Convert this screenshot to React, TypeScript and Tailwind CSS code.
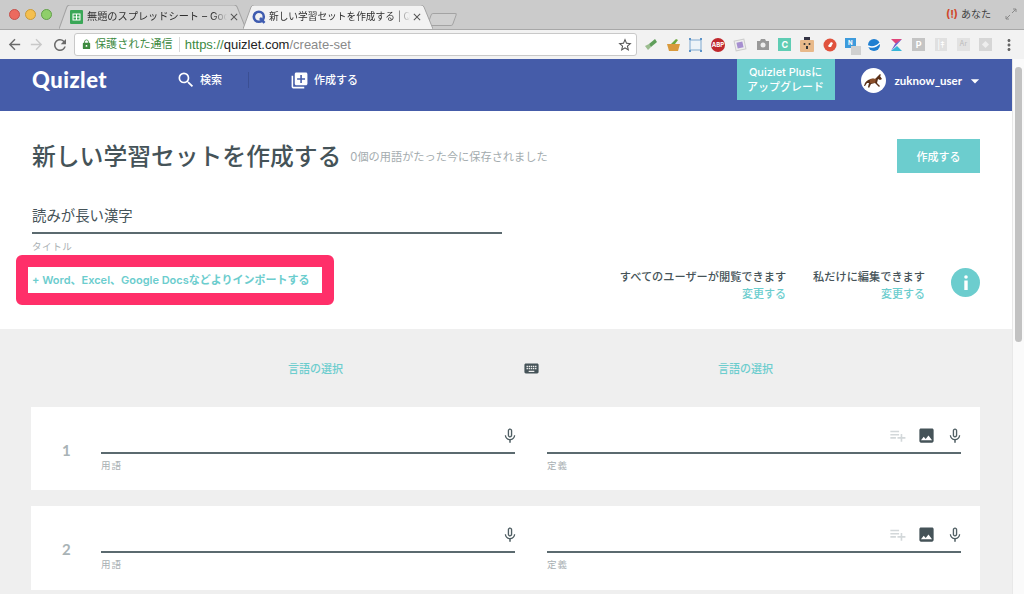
import React from "react";
import {
  MdArrowBack, MdArrowForward, MdRefresh, MdLock, MdStarBorder, MdSearch, MdLibraryAdd,
  MdMicNone, MdPlaylistAdd, MdPhoto, MdKeyboard, MdClose, MdArrowDropDown, MdMoreVert,
} from "react-icons/md";

const jp = "font-['Inter','Noto_Sans_CJK_JP',sans-serif]";

function Tab({ active, width, icon, title, pad, size }: { active?: boolean; width: string; icon: React.ReactNode; title: string; pad: string; size: string }) {
  return (
    <div className={`relative flex h-[24px] items-center ${width} ${active ? "z-10" : ""}`}>
      <svg className="absolute inset-0 h-full w-full" viewBox="0 0 190 24" preserveAspectRatio="none">
        <path
          d="M0 24 L8 2 Q9 0 11 0 L178 0 Q180 0 181 2 L190 24"
          fill={active ? "#f2f2f2" : "#d5d5d5"}
          stroke="#a3a3a3"
          strokeWidth="1"
          vectorEffect="non-scaling-stroke"
        />
      </svg>
      <div className={`relative flex w-full items-center ${pad}`}>
        <div className="flex w-[17px] shrink-0 items-center">{icon}</div>
        <span className={`min-w-0 flex-1 whitespace-nowrap text-[#303030] ${size} [mask-image:linear-gradient(to_right,black_90%,transparent)]`}>
          {title}
        </span>
        <MdClose className="ml-[1px] shrink-0 text-[#555]" size={12} />
      </div>
    </div>
  );
}

function SheetIcon() {
  return (
    <svg width="13" height="14" viewBox="0 0 13 14">
      <rect width="13" height="14" rx="1" fill="#3aa757" />
      <rect x="3" y="4" width="7" height="6" fill="none" stroke="#fff" strokeWidth="1" />
      <path d="M3 7h7M6.5 4v6" stroke="#fff" strokeWidth="1" />
    </svg>
  );
}

function QIcon() {
  return (
    <svg width="14" height="14" viewBox="0 0 14 14">
      <circle cx="6.8" cy="6.8" r="5" fill="none" stroke="#3f5cb0" strokeWidth="2.6" />
      <path d="M8 8l4.5 4.8" stroke="#3f5cb0" strokeWidth="2.6" />
    </svg>
  );
}

const extensions: React.ReactNode[] = [
  <svg key="a" width="14" height="14" viewBox="0 0 14 14"><path d="M1 8l4-2 2 3-3 3z" fill="#9bbd8f" /><path d="M5 6l6-5 2 3-6 5z" fill="#5f9e5a" /></svg>,
  <svg key="b" width="15" height="14" viewBox="0 0 15 14"><path d="M1 6h13l-2 7H3z" fill="#d99a3d" /><path d="M5 6l5-5 2 1-3 4z" fill="#6ea83f" /></svg>,
  <svg key="c" width="15" height="14" viewBox="0 0 15 14"><rect x="2" y="2" width="11" height="10" fill="#eef3f8" stroke="#7fa8cf" /><path d="M1 1h2M12 1h2M1 13h2M12 13h2" stroke="#5d93c7" strokeWidth="2" /></svg>,
  <div key="d" className="flex h-[14px] w-[14px] items-center justify-center rounded-full bg-[#c0282d] text-[6px] font-bold text-white">ABP</div>,
  <svg key="e" width="14" height="14" viewBox="0 0 14 14"><rect x="2" y="2" width="10" height="10" fill="#eee" stroke="#ccc" transform="rotate(-12 7 7)" /><rect x="4" y="4" width="6" height="6" fill="#a68fd0" transform="rotate(-12 7 7)" /></svg>,
  <svg key="f" width="14" height="13" viewBox="0 0 14 13"><path d="M1 3h3l1-2h4l1 2h3v9H1z" fill="#999" /><circle cx="7" cy="7" r="2.5" fill="#eee" /></svg>,
  <div key="g" className="flex h-[13px] w-[13px] items-center justify-center bg-[#5fcdb4] text-[9px] font-bold text-white">C</div>,
  <svg key="h" width="14" height="15" viewBox="0 0 14 15"><rect y="3" width="14" height="12" rx="1" fill="#e8b98a" /><rect x="4" y="0" width="6" height="3" fill="#334" /><circle cx="4.5" cy="7" r="1" fill="#333" /><circle cx="9.5" cy="7" r="1" fill="#333" /><rect x="6" y="9" width="2" height="3" fill="#333" /></svg>,
  <svg key="i" width="14" height="14" viewBox="0 0 14 14"><circle cx="7" cy="7" r="6.5" fill="#e0523d" /><path d="M5 8l3-4 2 1-2 4H6z" fill="#fff" /></svg>,
  <div key="j" className="relative h-[14px] w-[14px]">
    <div className="flex h-[10px] w-[11px] items-center justify-center bg-[#3d9bdc] text-[6px] font-bold text-white">N</div>
    <div className="absolute left-[6px] top-[8px] h-[9px] w-[10px] bg-[#d0d0d0]" />
  </div>,
  <svg key="k" width="14" height="14" viewBox="0 0 14 14"><circle cx="7" cy="7" r="6" fill="#1f7fd1" /><path d="M1 8q6 3 12-3" stroke="#fff" strokeWidth="1.4" fill="none" /></svg>,
  <svg key="l" width="13" height="14" viewBox="0 0 13 14"><path d="M1 1h11L6 6z" fill="#e0457a" /><path d="M12 1L1 13l4-7z" fill="#6a5fd0" /><path d="M1 13h11L7 8z" fill="#37b6d8" /></svg>,
  <div key="m" className="flex h-[13px] w-[13px] items-center justify-center bg-[#c4c4c4] text-[9px] font-bold text-white">P</div>,
  <div key="n" className="flex h-[13px] w-[12px] items-center justify-center bg-[#e0e0e0] text-[9px] text-white">|‡</div>,
  <div key="o" className="flex h-[13px] w-[13px] items-center justify-center bg-[#e2e2e2] text-[7px] text-[#bbb]">Ar</div>,
  <div key="p" className="flex h-[13px] w-[13px] items-center justify-center bg-[#d6d6d6]"><div className="h-[5px] w-[5px] rotate-45 bg-[#eee]" /></div>,
];

function Chrome() {
  return (
    <div className="shrink-0">
      <div className="flex h-[29px] items-end bg-[#cbcbcb]">
        <div className="flex h-full w-[59px] shrink-0 items-center gap-[5px] pl-[9px] pb-[1px]">
          <div className="h-[11px] w-[11px] rounded-full border border-[#c4524d] bg-[#ec6a5e]" />
          <div className="h-[11px] w-[11px] rounded-full border border-[#c99a3a] bg-[#f4bf4f]" />
          <div className="h-[11px] w-[11px] rounded-full border border-[#62a04a] bg-[#8fcf6a]" />
        </div>
        <Tab width="w-[187px]" pad="pl-[11px] pr-[6px]" size="text-[10.2px]" icon={<SheetIcon />} title="無題のスプレッドシート – Goog" />
        <div className="-ml-[3px] z-10">
          <Tab active width="w-[190px]" pad="pl-[9px] pr-[10px]" size="text-[9.7px]" icon={<QIcon />} title="新しい学習セットを作成する | Q" />
        </div>
        <div className="-ml-[4px] mb-[3px] h-[13px] w-[26px] -skew-x-[20deg] rounded-[2px] border border-[#a3a3a3] bg-[#d0d0d0]" />
        <div className="ml-auto flex h-full items-center pb-[1px] pr-[7px]">
          <span className="text-[11px] font-bold text-[#d0492b]">(!)</span>
          <span className="ml-[3px] text-[10px] text-[#404040]">あなた</span>
          <svg className="ml-[14px]" width="12" height="12" viewBox="0 0 12 12">
            <path d="M7 5l4-4M8 1h3v3M5 7l-4 4M1 8v3h3" stroke="#8a8a8a" fill="none" />
          </svg>
        </div>
      </div>
      <div className="flex h-[30px] items-center border-t border-[#a8a8a8] border-b-0 bg-[#f2f2f2]">
        <div className="flex w-[74px] shrink-0 items-center pl-[6px]">
          <MdArrowBack className="text-[#6a6a6a]" size={17} />
          <MdArrowForward className="ml-[5px] text-[#c8c8c8]" size={17} />
          <MdRefresh className="ml-[6px] text-[#6a6a6a]" size={18} />
        </div>
        <div className="flex h-[23px] w-[563px] shrink-0 items-center rounded-[3px] border border-[#c9c9c9] bg-white pl-[6px] pr-[3px]">
          <MdLock className="text-[#3c8a3f]" size={11} />
          <span className="ml-[3px] whitespace-nowrap text-[11.1px] text-[#3c8a3f]">保護された通信</span>
          <div className="ml-[6px] mr-[5px] h-[15px] w-px bg-[#d8d8d8]" />
          <span className="whitespace-nowrap font-['Liberation_Sans',sans-serif] text-[13px]">
            <span className="text-[#3c8a3f]">https://</span>
            <span className="text-[#222]">quizlet.com</span>
            <span className="text-[#8a8a8a]">/create-set</span>
          </span>
          <MdStarBorder className="ml-auto text-[#555]" size={16} />
        </div>
        <div className="flex flex-1 items-center pl-[3px]">
          {extensions.map((e, i) => (
            <div key={i} className="flex w-[22.3px] justify-center">{e}</div>
          ))}
          <MdMoreVert className="ml-[3px] text-[#666]" size={18} />
        </div>
      </div>
    </div>
  );
}

function Horse() {
  return (
    <svg className="h-[25px] w-[25px] rounded-full bg-white" viewBox="0 0 25 25">
      <path d="M4 15q4-5 10-4l3-3 2-2 1 1-1 1 2 3-2 1-2-1-1 4 3 3-1 1-4-4-4 1-2 4-1-1 1-4-2 0-2 3-1 0z" fill="#5a3018" />
      <path d="M9 11q3-1 6 0l-1 4-5 0z" fill="#8a4f2a" />
    </svg>
  );
}

function Header() {
  return (
    <div className="flex h-[52px] shrink-0 items-start bg-[#455ca9] text-white">
      <span className="ml-[32px] mt-[6px] w-[144px] font-['Lato',sans-serif] text-[22px] font-black leading-[30px] tracking-[0.5px]">Quizlet</span>
      <div className="mt-[11px] flex h-[20px] items-center">
        <MdSearch size={20} />
        <span className="ml-[4px] text-[11px] font-medium">検索</span>
        <div className="ml-[26px] h-[16px] w-px bg-[#3b4f93]" />
        <MdLibraryAdd className="ml-[41px]" size={19} />
        <span className="ml-[5px] text-[11px] font-medium">作成する</span>
      </div>
      <div className="ml-auto flex h-[41px] w-[98px] flex-col items-center justify-center bg-[#6ccdce] text-[11px] font-medium leading-[15px]">
        <span>Quizlet Plusに</span>
        <span>アップグレード</span>
      </div>
      <div className="ml-[26px] mt-[9px] flex items-center">
        <Horse />
        <span className="ml-[9px] font-['Lato',sans-serif] text-[11.5px] font-bold">zuknow_user</span>
        <MdArrowDropDown className="ml-[3px]" size={20} />
      </div>
      <div className="w-[27px] shrink-0" />
    </div>
  );
}

function Visibility({ text }: { text: string }) {
  return (
    <div className="flex flex-col items-end">
      <span className="text-[11.2px] font-medium leading-[16px] text-[#455358]">{text}</span>
      <span className="text-[11px] font-medium leading-[18px] text-[#6ccdce]">変更する</span>
    </div>
  );
}

function Top() {
  return (
    <div className="flex h-[218px] shrink-0 flex-col bg-white px-[32px]">
      <div className="mt-[28px] flex h-[34px] items-center">
        <h1 className="mt-[2px] whitespace-nowrap text-[23.8px] font-medium leading-[34px] text-[#455358]">新しい学習セットを作成する</h1>
        <span className="ml-[9px] mt-[2px] whitespace-nowrap text-[11.2px] text-[#a3abae]">0個の用語がたった今に保存されました</span>
        <button className="ml-auto flex h-[34px] w-[83px] items-center justify-center bg-[#6ccdce] pt-[3px] text-[11px] font-medium text-white">作成する</button>
      </div>
      <div className="mt-[32px] w-[470px] border-b-2 border-[#5b6a6f] pb-[6px] text-[14.4px] leading-[21px] text-[#455358]">読みが長い漢字</div>
      <span className="mt-[6px] text-[9.5px] leading-[13px] tracking-[0.6px] text-[#a9b0b3]">タイトル</span>
      <div className="mt-[2px] flex items-start">
        <div className="-ml-[16px] flex h-[50px] w-[318px] items-center rounded-[6px] border-[12px] border-[#ff2f69] bg-white pl-[4px] text-[11px] font-semibold text-[#6ccdce]">
          <span className="whitespace-nowrap">+ Word、Excel、Google Docsなどよりインポートする</span>
        </div>
        <div className="ml-auto mt-[14px] flex items-start">
          <Visibility text="すべてのユーザーが閲覧できます" />
          <div className="ml-[27px]"><Visibility text="私だけに編集できます" /></div>
          <div className="-mt-[1px] ml-[26px] flex h-[29px] w-[29px] items-center justify-center rounded-full bg-[#6ccdce] text-white">
            <svg width="6" height="15" viewBox="0 0 6 15"><circle cx="3" cy="2" r="1.8" fill="#fff" /><rect x="1.3" y="5.5" width="3.4" height="9.5" fill="#fff" /></svg>
          </div>
        </div>
      </div>
    </div>
  );
}

function Field({ label, width, margin, extra }: { label: string; width: string; margin?: string; extra?: boolean }) {
  return (
    <div className={`${width} ${margin ?? ""} shrink-0`}>
      <div className="flex h-[30px] items-center justify-end border-b-2 border-[#5b6a6f] pb-[5px]">
        {extra && (
          <>
            <MdPlaylistAdd className="mr-[10px] text-[#d3d8da]" size={19} />
            <MdPhoto className="mr-[8px] text-[#455358]" size={19} />
          </>
        )}
        <MdMicNone className={`${extra ? "mr-[-3px] ml-[2px]" : "mr-[-4px]"} text-[#4f5e63]`} size={18} />
      </div>
      <div className="mt-[6px] text-[9.5px] leading-[12px] tracking-[1px] text-[#a9b0b3]">{label}</div>
    </div>
  );
}

function Card({ n, height }: { n: number; height: string }) {
  return (
    <div className={`flex ${height} items-start bg-white pl-[31px] pt-[17px]`}>
      <span className="mt-[14px] w-[39px] font-['Lato',sans-serif] text-[15px] font-bold leading-[24px] text-[#a9b3b6]">{n}</span>
      <Field label="用語" width="w-[414px]" />
      <Field label="定義" width="w-[414px]" margin="ml-[32px]" extra />
    </div>
  );
}

export default function App() {
  return (
    <div className={`flex h-[594px] w-[1024px] flex-col overflow-hidden bg-white ${jp}`}>
      <Chrome />
      <div className="flex min-h-0 flex-1">
        <div className="flex min-w-0 flex-1 flex-col">
          <Header />
          <Top />
          <div className="flex flex-1 flex-col overflow-hidden bg-[#efefef] pl-[31px] pr-[32px]">
            <div className="flex h-[78px] shrink-0 items-start pt-[31px]">
              <span className="ml-[257px] text-[11px] font-medium leading-[18px] text-[#6ccdce]">言語の選択</span>
              <MdKeyboard className="ml-[180px] text-[#455358]" size={17} />
              <span className="ml-[178px] text-[11px] font-medium leading-[18px] text-[#6ccdce]">言語の選択</span>
            </div>
            <div className="flex flex-col gap-[16px]">
              <Card n={1} height="h-[83px]" />
              <Card n={2} height="h-[84px]" />
            </div>
          </div>
        </div>
        <div className="flex w-[12px] shrink-0 justify-center border-l border-[#e8e8e8] bg-[#fafafa] pt-[8px]">
          <div className="h-[275px] w-[7px] rounded-full bg-[#c2c2c2]" />
        </div>
      </div>
    </div>
  );
}
